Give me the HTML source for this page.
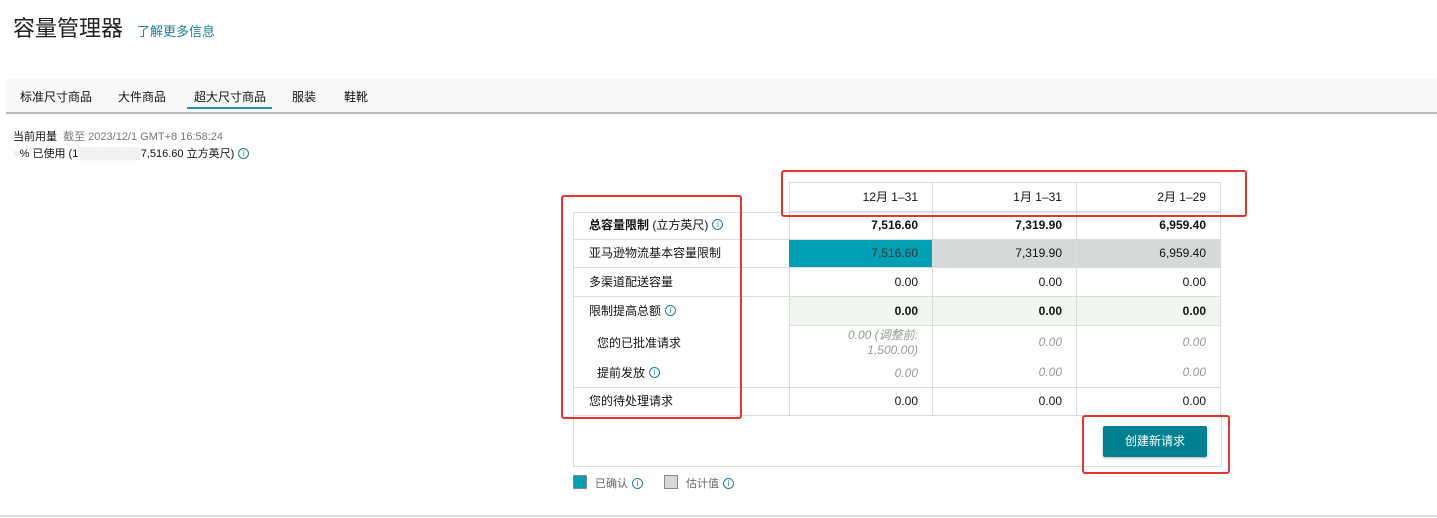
<!DOCTYPE html>
<html><head><meta charset="utf-8"><style>
*{margin:0;padding:0;box-sizing:border-box}
body{width:1437px;height:518px;background:#fff;position:relative;overflow:hidden;font-family:"Liberation Sans","Noto Sans CJK SC",sans-serif;color:#111;font-size:12px}
.a{position:absolute;white-space:nowrap}
.i{display:inline-block;width:11px;height:11px;border:1px solid #1f7f9a;border-radius:50%;color:#1f7f9a;font-size:8px;line-height:9px;text-align:center;font-weight:normal;font-style:normal;vertical-align:middle;margin-left:4px;margin-top:-2px}
.c{position:absolute;border-right:1px solid #dcdcdc;border-bottom:1px solid #dcdcdc;text-align:right;padding-right:14px;font-size:12px}
.l{position:absolute;border-bottom:1px solid #dcdcdc;border-left:1px solid #dcdcdc;border-right:1px solid #dcdcdc;padding-left:15px;font-size:12px}
.red{position:absolute;border:2.5px solid #e8342c;border-radius:3px}
</style></head><body>
<div class="a" style="left:13px;top:11px;font-size:22px;color:#222">容量管理器</div>
<div class="a" style="left:137px;top:21px;font-size:13px;color:#1f7f9a">了解更多信息</div>

<div class="a" style="left:6px;top:79px;width:1431px;height:35px;background:#f8f8f8;border-bottom:2px solid #bbb"></div>
<div class="a" style="left:20px;top:88px;font-size:12px">标准尺寸商品</div>
<div class="a" style="left:118px;top:88px;font-size:12px">大件商品</div>
<div class="a" style="left:194px;top:88px;font-size:12px">超大尺寸商品</div>
<div class="a" style="left:187px;top:107px;width:85px;height:2px;background:#1a9aa6"></div>
<div class="a" style="left:292px;top:88px;font-size:12px">服装</div>
<div class="a" style="left:344px;top:88px;font-size:12px">鞋靴</div>

<div class="a" style="left:13px;top:128px;font-size:11px">当前用量 <span style="color:#777">&nbsp;截至 2023/12/1 GMT+8 16:58:24</span></div>
<div class="a" style="left:13px;top:145px;font-size:11px"><span style="color:#eee">■</span>% 已使用 (1<span style="color:#f2f2f2">████████</span>7,516.60 立方英尺)<span class="i">i</span></div>

<!-- header -->
<div class="c" style="left:789px;top:182px;width:144px;height:30px;line-height:29px;border-top:1px solid #dcdcdc;border-left:1px solid #dcdcdc">12月 1–31</div>
<div class="c" style="left:933px;top:182px;width:144px;height:30px;line-height:29px;border-top:1px solid #dcdcdc">1月 1–31</div>
<div class="c" style="left:1077px;top:182px;width:144px;height:30px;line-height:29px;border-top:1px solid #dcdcdc">2月 1–29</div>
<div class="a" style="left:573px;top:212px;width:648px;height:1px;background:#dcdcdc"></div>

<!-- rows -->
<div class="l" style="left:573px;top:212px;width:217px;height:28px;line-height:27px"><b>总容量限制</b> (立方英尺)<span class="i">i</span></div>
<div class="c" style="left:789px;top:212px;width:144px;height:28px;line-height:27px;border-left:1px solid #dcdcdc;font-weight:bold">7,516.60</div>
<div class="c" style="left:933px;top:212px;width:144px;height:28px;line-height:27px;font-weight:bold">7,319.90</div>
<div class="c" style="left:1077px;top:212px;width:144px;height:28px;line-height:27px;font-weight:bold">6,959.40</div>

<div class="l" style="left:573px;top:240px;width:217px;height:28px;line-height:27px">亚马逊物流基本容量限制</div>
<div class="c" style="left:789px;top:240px;width:144px;height:28px;line-height:27px;background:#00a0b4;color:#333">7,516.60</div>
<div class="c" style="left:933px;top:240px;width:144px;height:28px;line-height:27px;background:#d5d9d9">7,319.90</div>
<div class="c" style="left:1077px;top:240px;width:144px;height:28px;line-height:27px;background:#d5d9d9">6,959.40</div>

<div class="l" style="left:573px;top:268px;width:217px;height:29px;line-height:28px">多渠道配送容量</div>
<div class="c" style="left:789px;top:268px;width:144px;height:29px;line-height:28px;border-left:1px solid #dcdcdc">0.00</div>
<div class="c" style="left:933px;top:268px;width:144px;height:29px;line-height:28px">0.00</div>
<div class="c" style="left:1077px;top:268px;width:144px;height:29px;line-height:28px">0.00</div>

<div class="l" style="left:573px;top:297px;width:217px;height:29px;line-height:28px;border-bottom:none">限制提高总额<span class="i">i</span></div>
<div class="c" style="left:789px;top:297px;width:144px;height:29px;line-height:28px;border-left:1px solid #dcdcdc;background:#f0f5f0;font-weight:bold">0.00</div>
<div class="c" style="left:933px;top:297px;width:144px;height:29px;line-height:28px;background:#f0f5f0;font-weight:bold">0.00</div>
<div class="c" style="left:1077px;top:297px;width:144px;height:29px;line-height:28px;background:#f0f5f0;font-weight:bold">0.00</div>

<div class="l" style="left:573px;top:326px;width:217px;height:62px;padding-left:23px"><div style="margin-top:8px">您的已批准请求</div><div style="margin-top:13px">提前发放<span class="i">i</span></div></div>
<div class="c" style="left:789px;top:326px;width:144px;height:62px;border-left:1px solid #dcdcdc;color:#999;font-style:italic;line-height:15px;padding-top:2px">0.00 (调整前:<br>1,500.00)<div style="margin-top:8px">0.00</div></div>
<div class="c" style="left:933px;top:326px;width:144px;height:62px;color:#999;font-style:italic;line-height:15px;padding-top:9px">0.00<div style="margin-top:15px">0.00</div></div>
<div class="c" style="left:1077px;top:326px;width:144px;height:62px;color:#999;font-style:italic;line-height:15px;padding-top:9px">0.00<div style="margin-top:15px">0.00</div></div>

<div class="l" style="left:573px;top:388px;width:217px;height:28px;line-height:27px">您的待处理请求</div>
<div class="c" style="left:789px;top:388px;width:144px;height:28px;line-height:27px;border-left:1px solid #dcdcdc">0.00</div>
<div class="c" style="left:933px;top:388px;width:144px;height:28px;line-height:27px">0.00</div>
<div class="c" style="left:1077px;top:388px;width:144px;height:28px;line-height:27px">0.00</div>

<div class="a" style="left:573px;top:415px;width:649px;height:52px;border:1px solid #dcdcdc;border-top:none"></div>
<div class="a" style="left:1103px;top:426px;width:104px;height:31px;background:#00818f;color:#fff;text-align:center;line-height:30px;font-size:12px;border-radius:2px;box-shadow:0 1px 2px rgba(0,0,0,.3)">创建新请求</div>

<div class="a" style="left:573px;top:475px;width:14px;height:14px;background:#00a0b4;border:1px solid #888"></div>
<div class="a" style="left:595px;top:475px;font-size:11px;color:#666">已确认<span class="i">i</span></div>
<div class="a" style="left:664px;top:475px;width:14px;height:14px;background:#d5d9d9;border:1px solid #888"></div>
<div class="a" style="left:686px;top:475px;font-size:11px;color:#666">估计值<span class="i">i</span></div>

<div class="a" style="left:0;top:515px;width:1437px;height:2px;background:#ddd"></div>

<div class="red" style="left:561px;top:195px;width:181px;height:224px"></div>
<div class="red" style="left:781px;top:170px;width:466px;height:47px"></div>
<div class="red" style="left:1082px;top:415px;width:148px;height:59px"></div>
</body></html>
